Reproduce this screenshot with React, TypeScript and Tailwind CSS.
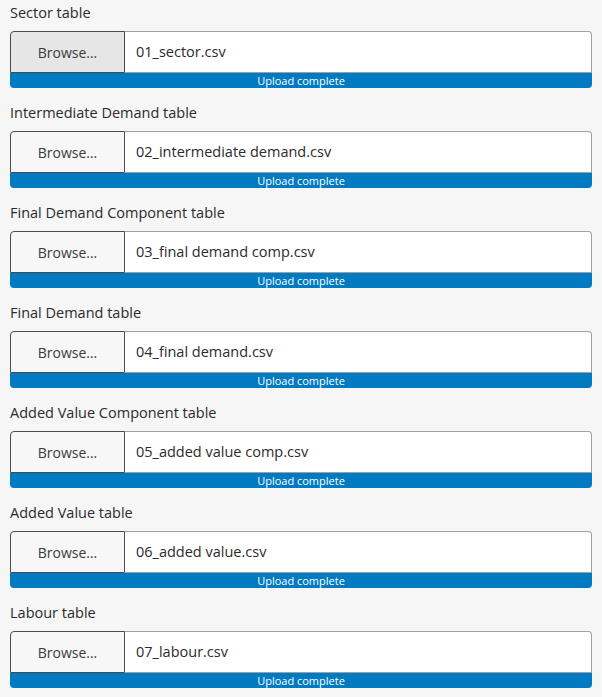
import React from "react";

interface IUploadFieldProps {
  label: string;
  fileName: string;
  active?: boolean;
}

const UploadField = ({ label, fileName, active }: IUploadFieldProps) => {
  return (
    <div className="flex flex-col pt-[2px] pb-[12px]">
      <label className="mb-2 block text-[14.5px] leading-[21px] text-[#2b2b2b]">
        {label}
      </label>
      <div className="flex h-[42px] w-full">
        <button
          type="button"
          className={`w-[115px] shrink-0 rounded-tl-[4px] border border-[#4a4a4a] text-[14px] text-[#3a3a3a] ${
            active ? "bg-[#e6e6e6]" : "bg-[#f7f7f7]"
          }`}
        >
          Browse...
        </button>
        <div className="flex flex-1 items-center rounded-tr-[4px] border border-l-0 border-[#9aa0a6] bg-white pl-[11px] text-[14.5px] text-[#2b2b2b]">
          {fileName}
        </div>
      </div>
      <div className="flex h-[15px] w-full items-center justify-center rounded-b-[4px] bg-[#007bc2] text-[11px] leading-[15px] text-white">
        Upload complete
      </div>
    </div>
  );
};

const App = () => {
  const fields = [
    { label: "Sector table", fileName: "01_sector.csv" },
    { label: "Intermediate Demand table", fileName: "02_intermediate demand.csv" },
    { label: "Final Demand Component table", fileName: "03_final demand comp.csv" },
    { label: "Final Demand table", fileName: "04_final demand.csv" },
    { label: "Added Value Component table", fileName: "05_added value comp.csv" },
    { label: "Added Value table", fileName: "06_added value.csv" },
    { label: "Labour table", fileName: "07_labour.csv" },
  ];

  return (
    <div
      className="min-h-screen bg-[#f6f6f6] px-[10px]"
      style={{ fontFamily: '"Open Sans", "Noto Sans", sans-serif' }}
    >
      {fields.map((field, i) => (
        <UploadField
          key={field.fileName}
          label={field.label}
          fileName={field.fileName}
          active={i === 0}
        />
      ))}
    </div>
  );
};

export default App;
